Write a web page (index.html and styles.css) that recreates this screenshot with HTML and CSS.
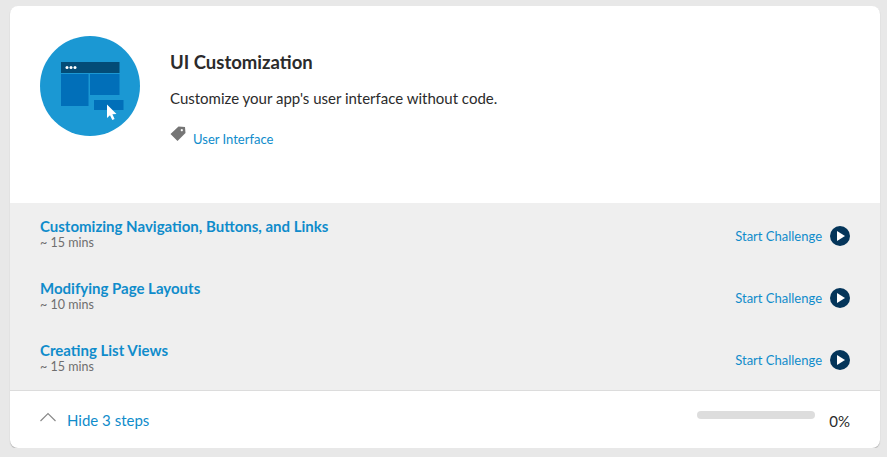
FILE: index.html
```html
<!DOCTYPE html>
<html lang="en">
<head>
    <meta charset="UTF-8">
    <title>UI Customization</title>
    <link rel="stylesheet" href="styles.css">
</head>
<body>

    <section class="card">
        <div class="intro">
            <svg class="badge" width="100" height="100" viewBox="0 0 100 100">
                <circle cx="50" cy="50" r="50" fill="#1b98d3"/>
                <rect x="21" y="26" width="58.5" height="11" fill="#034c77"/>
                <circle cx="27" cy="31.500" r="1.500" fill="#fff"/>
                <circle cx="31" cy="31.500" r="1.500" fill="#fff"/>
                <circle cx="35" cy="31.500" r="1.500" fill="#fff"/>
                <rect x="21" y="38" width="27.500" height="32" fill="#016fb9"/>
                <rect x="50" y="38" width="29.500" height="21" fill="#016fb9"/>
                <rect x="54" y="64" width="29.500" height="10" fill="#016fb9"/>
                <path d="M67 68.500 L67 82 L70 79.300 L72.300 84 L74.600 83 L72.400 78.300 L76.500 78 Z" fill="#fff"/>
            </svg>
            <div class="intro-text">
                <h1>UI Customization</h1>
                <p>Customize your app's user interface without code.</p>
                <div class="tag">
                    <svg width="16" height="16" viewBox="0 0 16 16">
                        <path d="M0.500 8 L8.500 0.500 L15 1 L15.500 7 L7.500 15 Z M11.800 3 a1.100 1.100 0 1 0 0.010 0 Z" fill="#757575" fill-rule="evenodd"/>
                    </svg>
                    <a href="#">User Interface</a>
                </div>
            </div>
        </div>

        <div class="steps">
            <div class="step">
                <div>
                    <a class="step-title" href="#">Customizing Navigation, Buttons, and Links</a>
                    <div class="step-time">~ 15 mins</div>
                </div>
                <a class="start" href="#">Start Challenge <span class="play"></span></a>
            </div>
            <div class="step">
                <div>
                    <a class="step-title" href="#">Modifying Page Layouts</a>
                    <div class="step-time">~ 10 mins</div>
                </div>
                <a class="start" href="#">Start Challenge <span class="play"></span></a>
            </div>
            <div class="step">
                <div>
                    <a class="step-title" href="#">Creating List Views</a>
                    <div class="step-time">~ 15 mins</div>
                </div>
                <a class="start" href="#">Start Challenge <span class="play"></span></a>
            </div>
        </div>

        <div class="card-foot">
            <a class="toggle" href="#">
                <svg width="16" height="10" viewBox="0 0 16 10">
                    <path d="M0.500 9 L8 1.500 L15.500 9" fill="none" stroke="#8a8a8a" stroke-width="1.200"/>
                </svg>
                Hide 3 steps
            </a>
            <div class="progress">
                <div class="bar"></div>
                <span class="percent">0%</span>
            </div>
        </div>
    </section>

</body>
</html>
```

FILE: styles.css
```css
body {
    font-family: Lato, Roboto, Arial, sans-serif;
    background: #e8e8e8;
    color: #2b2b2b;
    margin: 0;
    padding: 6px 7px 0 10px;
}

a {
    color: #0f8ccb;
    text-decoration: none;
}

.card {
    background: white;
    border-radius: 8px;
    box-shadow: 0 1px 1px rgba(0, 0, 0, 0.25);
    overflow: hidden;
}

.intro {
    display: flex;
    gap: 30px;
    height: 197px;
    padding: 30px 30px 0;
    box-sizing: border-box;
}

.intro-text {
    padding-top: 14px;
}

h1 {
    font-size: 18.500px;
    font-weight: 700;
    line-height: 24px;
    margin: 0;
}

.intro-text p {
    font-size: 15px;
    line-height: 20px;
    margin: 14px 0 0;
}

.tag {
    display: flex;
    gap: 7px;
    margin-top: 21px;
    font-size: 13px;
    line-height: 20px;
}

.tag svg {
    margin-top: -3px;
}

.steps {
    background: #efefef;
    height: 188px;
    box-sizing: border-box;
    border-bottom: 1px solid #dcdcdc;
}

.step {
    display: flex;
    justify-content: space-between;
    align-items: center;
    height: 62px;
    padding: 0 30px;
}

.step-title {
    font-size: 15px;
    font-weight: 700;
    line-height: 18px;
    display: block;
}

.step-time {
    font-size: 12.500px;
    color: #6e6e6e;
    line-height: 16px;
}

.start {
    display: flex;
    align-items: center;
    gap: 8px;
    margin-top: 4px;
    font-size: 13px;
}

.play {
    width: 20px;
    height: 20px;
    border-radius: 50%;
    background: #04355a;
    position: relative;
}

.play::after {
    content: "";
    position: absolute;
    left: 7px;
    top: 5px;
    border-left: 8px solid white;
    border-top: 5px solid transparent;
    border-bottom: 5px solid transparent;
}

.card-foot {
    display: flex;
    justify-content: space-between;
    align-items: center;
    height: 57px;
    padding: 0 30px;
}

.toggle {
    display: flex;
    align-items: center;
    gap: 11px;
    font-size: 15px;
}

.toggle svg {
    margin-top: -6px;
}

.progress {
    display: flex;
    align-items: flex-start;
    gap: 14px;
}

.bar {
    width: 118px;
    height: 8px;
    margin-top: 3px;
    background: #dddddd;
    border-radius: 4px;
}

.percent {
    font-size: 15px;
    line-height: 20px;
    padding-top: 3px;
}
```
